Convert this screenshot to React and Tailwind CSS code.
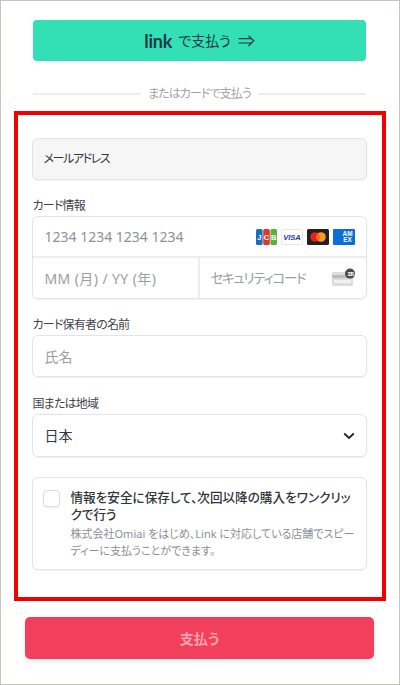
const font = { fontFamily: '"Noto Sans", "Noto Sans CJK JP", sans-serif' };

function Jcb() {
  return (
    <svg width="21" height="16" viewBox="0 0 21 16">
      <rect x="0" y="0" width="6.6" height="16" rx="1.6" fill="#1a6fb5" />
      <rect x="7.2" y="0" width="6.6" height="16" rx="1.6" fill="#d93a2b" />
      <rect x="14.4" y="0" width="6.6" height="16" rx="1.6" fill="#5cae3f" />
      <text x="3.3" y="11" textAnchor="middle" fontSize="7.5" fontWeight="700" fill="#fff" fontFamily="Liberation Sans">J</text>
      <text x="10.5" y="11" textAnchor="middle" fontSize="7.5" fontWeight="700" fill="#fff" fontFamily="Liberation Sans">C</text>
      <text x="17.7" y="11" textAnchor="middle" fontSize="7.5" fontWeight="700" fill="#fff" fontFamily="Liberation Sans">B</text>
    </svg>
  );
}

function Visa() {
  return (
    <svg width="22" height="16" viewBox="0 0 22 16">
      <rect x="0.5" y="0.5" width="21" height="15" rx="1.5" fill="#fff" stroke="#e3e5ea" />
      <text x="11" y="11" textAnchor="middle" fontSize="7.6" fontWeight="700" fontStyle="italic" fill="#1a3a9c" fontFamily="Liberation Sans">VISA</text>
    </svg>
  );
}

function Master() {
  return (
    <svg width="22" height="16" viewBox="0 0 22 16">
      <rect x="0" y="0" width="22" height="16" rx="1.5" fill="#23211f" />
      <circle cx="8" cy="8" r="4.8" fill="#e5201f" />
      <circle cx="14" cy="8" r="4.8" fill="#f59d1c" />
      <path d="M11 4.2a4.8 4.8 0 0 1 0 7.6a4.8 4.8 0 0 1 0-7.6z" fill="#f4641d" />
    </svg>
  );
}

function Amex() {
  return (
    <svg width="22" height="16" viewBox="0 0 22 16">
      <rect x="0" y="0" width="22" height="16" rx="1" fill="#0a6fd6" />
      <text x="14.5" y="7.4" textAnchor="middle" fontSize="6.4" fontWeight="700" fill="#fff" fontFamily="Liberation Sans">AM</text>
      <text x="14.5" y="13.4" textAnchor="middle" fontSize="6.4" fontWeight="700" fill="#fff" fontFamily="Liberation Sans">EX</text>
    </svg>
  );
}

function Cvc() {
  return (
    <svg width="24" height="17" viewBox="0 0 24 17" className="overflow-visible">
      <rect x="0" y="2" width="21" height="14" rx="1.5" fill="#dcdcdc" />
      <rect x="0" y="5" width="21" height="3.2" fill="#bdbdbd" />
      <rect x="2" y="10" width="17" height="3" fill="#f1f1f1" />
      <circle cx="18" cy="3.6" r="5" fill="#4a4a4a" />
      <text x="18" y="5.6" textAnchor="middle" fontSize="5.6" fontWeight="700" fill="#fff" fontFamily="Liberation Sans">135</text>
    </svg>
  );
}

function Label({ children }) {
  return <div className="text-[12px] leading-[16px] tracking-[-0.8px] text-[#3f444b] mb-[2px] pl-[1px]">{children}</div>;
}

export default function App() {
  return (
    <div style={font} className="w-[400px] h-[685px] bg-white border border-[#c9c5bc] flex flex-col items-center overflow-hidden [font-feature-settings:'palt']">
      <button className="mt-[19px] mr-[1px] w-[333px] h-[41px] shrink-0 rounded-[4px] bg-[#33dfb4] flex items-center justify-center text-[#1d3a4a]">
        <span style={{ fontFamily: 'Lato, sans-serif' }} className="text-[18px] leading-none font-bold tracking-[-0.2px] mr-[6px]">link</span>
        <span className="text-[14px] leading-none">で支払う</span>
        <svg width="17" height="12" viewBox="0 0 17 12" className="ml-[7px]" fill="none" stroke="#1d3a4a" strokeWidth="1.2">
          <path d="M0.5 3.6H13M0.5 8H13M10.5 0.8L15.8 5.8L10.5 11" />
        </svg>
      </button>

      <div className="mt-[23px] mr-[1px] w-[333px] flex items-center gap-[7px] shrink-0 h-[20px]">
        <div className="flex-1 h-[2px] bg-[#eeeeee]" />
        <span className="text-[12px] leading-none tracking-[-0.9px] text-[#a3a3a3]">またはカードで支払う</span>
        <div className="flex-1 h-[2px] bg-[#eeeeee]" />
      </div>

      <div className="mt-[7px] w-[372px] h-[490px] shrink-0 border-4 border-[#f00000] pl-[14px] pr-[15px] pt-[23px] mr-[1px]">
        <div className="h-[42px] rounded-[6px] bg-[#f6f6f6] border border-[#e2e2e2] flex items-center pl-[11px] text-[12px] tracking-[-1.4px] text-[#2f3640] shadow-[0_1px_2px_rgba(0,0,0,0.05)]">
          メールアドレス
        </div>

        <div className="mt-[18px]">
          <Label>カード情報</Label>
          <div className="rounded-[6px] border border-[#e4e4e4] shadow-[0_1px_2px_rgba(0,0,0,0.06)]">
            <div className="h-[41px] flex items-center justify-between pl-[12px] pr-[11px] border-b-2 border-[#eeeeee]">
              <span className="text-[14px] text-[#8d9197]">1234 1234 1234 1234</span>
              <div className="flex items-center gap-[4px]">
                <Jcb />
                <Visa />
                <Master />
                <Amex />
              </div>
            </div>
            <div className="h-[40px] flex">
              <div className="w-[167px] border-r-2 border-[#eeeeee] flex items-center pl-[12px] text-[14px] tracking-[0.4px] text-[#9a9ea4]">MM (月) / YY (年)</div>
              <div className="flex-1 flex items-center justify-between pl-[11px] pr-[10px] text-[13.5px] tracking-[-1.3px] text-[#9a9ea4] whitespace-nowrap">
                <span>セキュリティコード</span>
                <Cvc />
              </div>
            </div>
          </div>
        </div>

        <div className="mt-[18px]">
          <Label>カード保有者の名前</Label>
          <div className="h-[42px] rounded-[6px] border border-[#e4e4e4] shadow-[0_1px_2px_rgba(0,0,0,0.06)] flex items-center pl-[12px] text-[14px] text-[#9a9ea4]">氏名</div>
        </div>

        <div className="mt-[19px]">
          <Label>国または地域</Label>
          <div className="h-[43px] rounded-[6px] border border-[#e4e4e4] shadow-[0_1px_2px_rgba(0,0,0,0.06)] flex items-center justify-between pl-[12px] pr-[11px] text-[14px] text-[#33383f]">
            <span>日本</span>
            <svg width="12" height="8" viewBox="0 0 12 8" fill="none" stroke="#1f2328" strokeWidth="1.8">
              <path d="M1.2 1.5L6 6L10.8 1.5" />
            </svg>
          </div>
        </div>

        <div className="mt-[20px] h-[93px] rounded-[6px] border border-[#e4e4e4] shadow-[0_1px_2px_rgba(0,0,0,0.06)] flex pl-[10px] pr-[11px] pt-[11px]">
          <div className="w-[17px] h-[17px] mt-[1px] shrink-0 rounded-[4px] border border-[#dedede] bg-white shadow-[0_1px_2px_rgba(0,0,0,0.08)]" />
          <div className="ml-[11px] flex-1">
            <div className="text-[12.6px] leading-[17px] font-medium text-[#30353b]">情報を安全に保存して、次回以降の購入をワンクリックで行う</div>
            <div className="mt-[2px] text-[11px] leading-[17px] text-[#8a8f96]">株式会社Omiai をはじめ、Link に対応している店舗でスピーディーに支払うことができます。</div>
          </div>
        </div>
      </div>

      <button className="mt-[16px] mr-[1px] w-[349px] h-[42px] shrink-0 rounded-[5px] bg-[#f2405c] text-[#f9a3b2] text-[14px] font-bold shadow-[0_2px_5px_rgba(60,90,100,0.15)] flex items-center justify-center">
        支払う
      </button>
    </div>
  );
}
